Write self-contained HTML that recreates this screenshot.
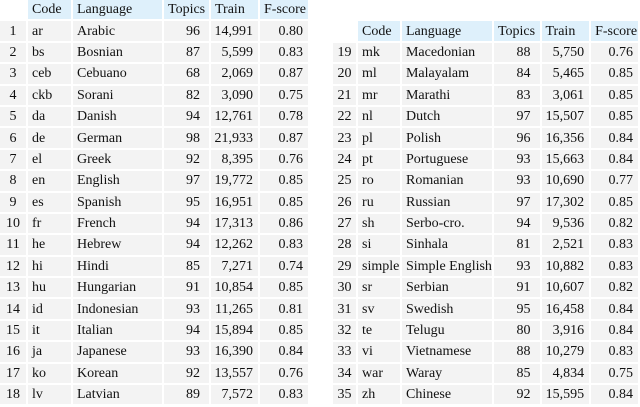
<!DOCTYPE html>
<html><head><meta charset="utf-8"><style>
html,body{margin:0;padding:0;background:#fff;width:640px;height:407px;overflow:hidden;position:relative}
table{position:absolute;border-collapse:separate;border-spacing:2px;table-layout:fixed;font-family:"Liberation Serif","DejaVu Serif",serif;font-size:14px;color:#111}
td,th{height:19.4px;padding:0;line-height:19px;white-space:nowrap;overflow:hidden}
th{background:#def0fb;font-weight:normal;text-align:left;padding-left:4px}
th.e{background:#fff}
td{background:#f3f3f3}
td.i{text-align:center}
td.c,td.l{text-align:left;padding-left:4px}
td.t{text-align:right;padding-right:9px}
td.r,td.f{text-align:right;padding-right:5px}
#L{left:-2px;top:-2px}
#R{left:331px;top:19.4px}
</style></head><body>
<table id="L">
<colgroup><col style="width:26px"><col style="width:43px"><col style="width:89px"><col style="width:45px"><col style="width:47px"><col style="width:48px"></colgroup>
<tr><th class="e"></th><th>Code</th><th>Language</th><th>Topics</th><th>Train</th><th>F-score</th></tr>
<tr><td class="i">1</td><td class="c">ar</td><td class="l">Arabic</td><td class="t">96</td><td class="r">14,991</td><td class="f">0.80</td></tr>
<tr><td class="i">2</td><td class="c">bs</td><td class="l">Bosnian</td><td class="t">87</td><td class="r">5,599</td><td class="f">0.83</td></tr>
<tr><td class="i">3</td><td class="c">ceb</td><td class="l">Cebuano</td><td class="t">68</td><td class="r">2,069</td><td class="f">0.87</td></tr>
<tr><td class="i">4</td><td class="c">ckb</td><td class="l">Sorani</td><td class="t">82</td><td class="r">3,090</td><td class="f">0.75</td></tr>
<tr><td class="i">5</td><td class="c">da</td><td class="l">Danish</td><td class="t">94</td><td class="r">12,761</td><td class="f">0.78</td></tr>
<tr><td class="i">6</td><td class="c">de</td><td class="l">German</td><td class="t">98</td><td class="r">21,933</td><td class="f">0.87</td></tr>
<tr><td class="i">7</td><td class="c">el</td><td class="l">Greek</td><td class="t">92</td><td class="r">8,395</td><td class="f">0.76</td></tr>
<tr><td class="i">8</td><td class="c">en</td><td class="l">English</td><td class="t">97</td><td class="r">19,772</td><td class="f">0.85</td></tr>
<tr><td class="i">9</td><td class="c">es</td><td class="l">Spanish</td><td class="t">95</td><td class="r">16,951</td><td class="f">0.85</td></tr>
<tr><td class="i">10</td><td class="c">fr</td><td class="l">French</td><td class="t">94</td><td class="r">17,313</td><td class="f">0.86</td></tr>
<tr><td class="i">11</td><td class="c">he</td><td class="l">Hebrew</td><td class="t">94</td><td class="r">12,262</td><td class="f">0.83</td></tr>
<tr><td class="i">12</td><td class="c">hi</td><td class="l">Hindi</td><td class="t">85</td><td class="r">7,271</td><td class="f">0.74</td></tr>
<tr><td class="i">13</td><td class="c">hu</td><td class="l">Hungarian</td><td class="t">91</td><td class="r">10,854</td><td class="f">0.85</td></tr>
<tr><td class="i">14</td><td class="c">id</td><td class="l">Indonesian</td><td class="t">93</td><td class="r">11,265</td><td class="f">0.81</td></tr>
<tr><td class="i">15</td><td class="c">it</td><td class="l">Italian</td><td class="t">94</td><td class="r">15,894</td><td class="f">0.85</td></tr>
<tr><td class="i">16</td><td class="c">ja</td><td class="l">Japanese</td><td class="t">93</td><td class="r">16,390</td><td class="f">0.84</td></tr>
<tr><td class="i">17</td><td class="c">ko</td><td class="l">Korean</td><td class="t">92</td><td class="r">13,557</td><td class="f">0.76</td></tr>
<tr><td class="i">18</td><td class="c">lv</td><td class="l">Latvian</td><td class="t">89</td><td class="r">7,572</td><td class="f">0.83</td></tr>
</table>
<table id="R">
<colgroup><col style="width:24px"><col style="width:42px"><col style="width:90px"><col style="width:46px"><col style="width:48px"><col style="width:47px"></colgroup>
<tr><th class="e"></th><th>Code</th><th>Language</th><th>Topics</th><th>Train</th><th>F-score</th></tr>
<tr><td class="i">19</td><td class="c">mk</td><td class="l">Macedonian</td><td class="t">88</td><td class="r">5,750</td><td class="f">0.76</td></tr>
<tr><td class="i">20</td><td class="c">ml</td><td class="l">Malayalam</td><td class="t">84</td><td class="r">5,465</td><td class="f">0.85</td></tr>
<tr><td class="i">21</td><td class="c">mr</td><td class="l">Marathi</td><td class="t">83</td><td class="r">3,061</td><td class="f">0.85</td></tr>
<tr><td class="i">22</td><td class="c">nl</td><td class="l">Dutch</td><td class="t">97</td><td class="r">15,507</td><td class="f">0.85</td></tr>
<tr><td class="i">23</td><td class="c">pl</td><td class="l">Polish</td><td class="t">96</td><td class="r">16,356</td><td class="f">0.84</td></tr>
<tr><td class="i">24</td><td class="c">pt</td><td class="l">Portuguese</td><td class="t">93</td><td class="r">15,663</td><td class="f">0.84</td></tr>
<tr><td class="i">25</td><td class="c">ro</td><td class="l">Romanian</td><td class="t">93</td><td class="r">10,690</td><td class="f">0.77</td></tr>
<tr><td class="i">26</td><td class="c">ru</td><td class="l">Russian</td><td class="t">97</td><td class="r">17,302</td><td class="f">0.85</td></tr>
<tr><td class="i">27</td><td class="c">sh</td><td class="l">Serbo-cro.</td><td class="t">94</td><td class="r">9,536</td><td class="f">0.82</td></tr>
<tr><td class="i">28</td><td class="c">si</td><td class="l">Sinhala</td><td class="t">81</td><td class="r">2,521</td><td class="f">0.83</td></tr>
<tr><td class="i">29</td><td class="c">simple</td><td class="l">Simple English</td><td class="t">93</td><td class="r">10,882</td><td class="f">0.83</td></tr>
<tr><td class="i">30</td><td class="c">sr</td><td class="l">Serbian</td><td class="t">91</td><td class="r">10,607</td><td class="f">0.82</td></tr>
<tr><td class="i">31</td><td class="c">sv</td><td class="l">Swedish</td><td class="t">95</td><td class="r">16,458</td><td class="f">0.84</td></tr>
<tr><td class="i">32</td><td class="c">te</td><td class="l">Telugu</td><td class="t">80</td><td class="r">3,916</td><td class="f">0.84</td></tr>
<tr><td class="i">33</td><td class="c">vi</td><td class="l">Vietnamese</td><td class="t">88</td><td class="r">10,279</td><td class="f">0.83</td></tr>
<tr><td class="i">34</td><td class="c">war</td><td class="l">Waray</td><td class="t">85</td><td class="r">4,834</td><td class="f">0.75</td></tr>
<tr><td class="i">35</td><td class="c">zh</td><td class="l">Chinese</td><td class="t">92</td><td class="r">15,595</td><td class="f">0.84</td></tr>
</table>
</body></html>
